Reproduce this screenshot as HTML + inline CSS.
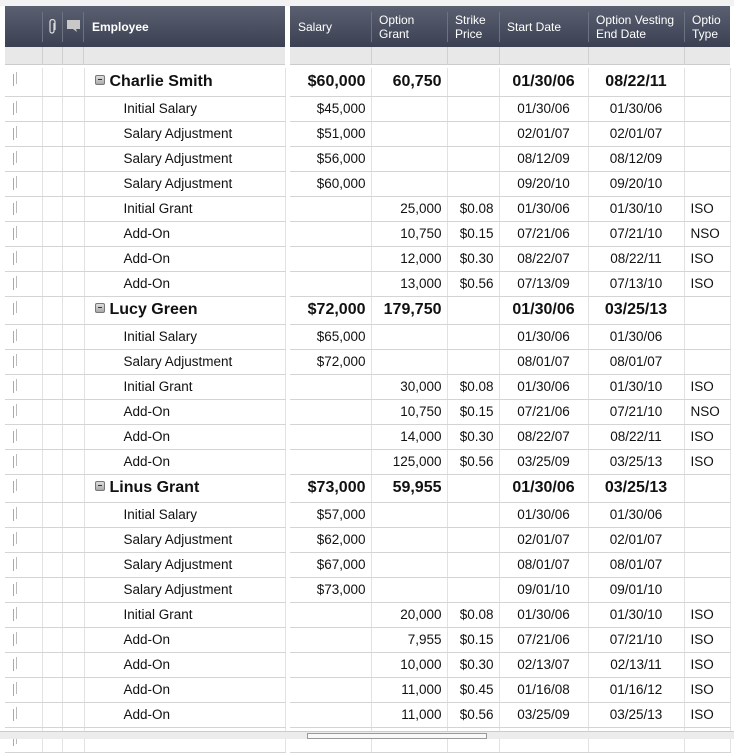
<!DOCTYPE html>
<html><head><style>
*{margin:0;padding:0;box-sizing:border-box}
body{width:734px;height:739px;overflow:hidden;background:#fff;font-family:"Liberation Sans",Arial,sans-serif;position:relative}
.top{position:absolute;left:0;top:0;width:734px;height:6px;background:#f2f2f2}
.hdr{position:absolute;left:5px;top:6px;width:725px;height:41px;background:linear-gradient(#5a6070,#3b4152);color:#fff;font-size:12px}
.hdr div{position:absolute;top:0;height:41px;display:flex;align-items:center;padding-left:8px;line-height:14px}
.hdr .sep{position:absolute;top:6px;width:1px;height:30px;background:#6d7382;padding:0}
.sub{position:absolute;left:5px;top:47px;width:725px;height:18px;background:#e8e8e8;border-bottom:1px solid #ccc}
.sub i{position:absolute;top:0;width:1px;height:18px;background:#cfcfcf}
table{position:absolute;left:5px;top:68px;border-collapse:collapse;table-layout:fixed;width:725px;font-size:13.5px;color:#111}
td{border-bottom:1px solid #d4d4d4;border-right:1px solid #e2e2e2;height:25px;padding:0;white-space:nowrap;overflow:hidden}
tr.g td{height:28px;font-weight:bold;font-size:16px}
td.h{position:relative}
td.h:after{content:"";position:absolute;left:8px;top:6px;width:1px;height:12px;background:#aaa;box-shadow:3px -2px 0 #bbb}
td.e{padding-left:39px}
tr.g td.e{padding-left:10px}
td.d{background:#fff;border-right:none;border-bottom:none;border-left:1px solid #ccc}
.r{text-align:right;padding-right:5px}
.c{text-align:center}
.l{padding-left:6px}
.m{display:inline-block;width:10px;height:10px;border:1px solid #777;border-radius:2px;background:linear-gradient(#ddd,#aaa);vertical-align:1px;margin-right:5px;position:relative}
.m:after{content:"";position:absolute;left:2px;top:3px;width:4px;height:1px;background:#333}
.bot{position:absolute;left:0;top:731px;width:734px;height:8px;background:#ececec;border-top:1px solid #ccc}
.thumb{position:absolute;left:307px;top:733px;width:180px;height:6px;border:1px solid #999;background:#f8f8f8}
</style></head><body>
<div class="top"></div>
<div class="hdr">
<span class="sep" style="left:37px"></span><span class="sep" style="left:57px"></span><span class="sep" style="left:78px"></span>
<svg style="position:absolute;left:43px;top:13px" width="9" height="16" viewBox="0 0 9 16"><path d="M6 4 V12 A2 2 0 0 1 2 12 V3 A2.5 2.5 0 0 1 7 3 V11" fill="none" stroke="#ddd" stroke-width="1.2"/></svg>
<svg style="position:absolute;left:62px;top:14px" width="14" height="13" viewBox="0 0 14 13"><path d="M0 0 H13 V9 H9 L10 12 L6 9 H0 Z" fill="#c8c8c8"/></svg>
<div style="left:79px;font-weight:bold">Employee</div>
<div style="left:280px;width:5px;background:#fff;padding:0"></div>
<div style="left:285px">Salary</div><span class="sep" style="left:366px"></span>
<div style="left:366px">Option<br>Grant</div><span class="sep" style="left:442px"></span>
<div style="left:442px">Strike<br>Price</div><span class="sep" style="left:494px"></span>
<div style="left:494px">Start Date</div><span class="sep" style="left:583px"></span>
<div style="left:583px">Option Vesting<br>End Date</div><span class="sep" style="left:679px"></span>
<div style="left:679px">Optio<br>Type</div>
</div>
<div class="sub"><i style="left:37px"></i><i style="left:57px"></i><i style="left:78px"></i><i style="left:280px;width:5px;background:#fff"></i><i style="left:366px"></i><i style="left:442px"></i><i style="left:494px"></i><i style="left:583px"></i><i style="left:679px"></i></div>
<table>
<colgroup><col style="width:37px"><col style="width:20px"><col style="width:22px"><col style="width:201px"><col style="width:5px"><col style="width:81px"><col style="width:76px"><col style="width:52px"><col style="width:89px"><col style="width:96px"><col style="width:46px"></colgroup>
<tr class="g"><td class="h"></td><td></td><td></td><td class="e"><span class="m"></span>Charlie Smith</td><td class="d"></td><td class="r">$60,000</td><td class="r">60,750</td><td></td><td class="c">01/30/06</td><td class="c">08/22/11</td><td></td></tr>
<tr><td class="h"></td><td></td><td></td><td class="e">Initial Salary</td><td class="d"></td><td class="r">$45,000</td><td></td><td></td><td class="c">01/30/06</td><td class="c">01/30/06</td><td></td></tr>
<tr><td class="h"></td><td></td><td></td><td class="e">Salary Adjustment</td><td class="d"></td><td class="r">$51,000</td><td></td><td></td><td class="c">02/01/07</td><td class="c">02/01/07</td><td></td></tr>
<tr><td class="h"></td><td></td><td></td><td class="e">Salary Adjustment</td><td class="d"></td><td class="r">$56,000</td><td></td><td></td><td class="c">08/12/09</td><td class="c">08/12/09</td><td></td></tr>
<tr><td class="h"></td><td></td><td></td><td class="e">Salary Adjustment</td><td class="d"></td><td class="r">$60,000</td><td></td><td></td><td class="c">09/20/10</td><td class="c">09/20/10</td><td></td></tr>
<tr><td class="h"></td><td></td><td></td><td class="e">Initial Grant</td><td class="d"></td><td></td><td class="r">25,000</td><td class="r">$0.08</td><td class="c">01/30/06</td><td class="c">01/30/10</td><td class="l">ISO</td></tr>
<tr><td class="h"></td><td></td><td></td><td class="e">Add-On</td><td class="d"></td><td></td><td class="r">10,750</td><td class="r">$0.15</td><td class="c">07/21/06</td><td class="c">07/21/10</td><td class="l">NSO</td></tr>
<tr><td class="h"></td><td></td><td></td><td class="e">Add-On</td><td class="d"></td><td></td><td class="r">12,000</td><td class="r">$0.30</td><td class="c">08/22/07</td><td class="c">08/22/11</td><td class="l">ISO</td></tr>
<tr><td class="h"></td><td></td><td></td><td class="e">Add-On</td><td class="d"></td><td></td><td class="r">13,000</td><td class="r">$0.56</td><td class="c">07/13/09</td><td class="c">07/13/10</td><td class="l">ISO</td></tr>
<tr class="g"><td class="h"></td><td></td><td></td><td class="e"><span class="m"></span>Lucy Green</td><td class="d"></td><td class="r">$72,000</td><td class="r">179,750</td><td></td><td class="c">01/30/06</td><td class="c">03/25/13</td><td></td></tr>
<tr><td class="h"></td><td></td><td></td><td class="e">Initial Salary</td><td class="d"></td><td class="r">$65,000</td><td></td><td></td><td class="c">01/30/06</td><td class="c">01/30/06</td><td></td></tr>
<tr><td class="h"></td><td></td><td></td><td class="e">Salary Adjustment</td><td class="d"></td><td class="r">$72,000</td><td></td><td></td><td class="c">08/01/07</td><td class="c">08/01/07</td><td></td></tr>
<tr><td class="h"></td><td></td><td></td><td class="e">Initial Grant</td><td class="d"></td><td></td><td class="r">30,000</td><td class="r">$0.08</td><td class="c">01/30/06</td><td class="c">01/30/10</td><td class="l">ISO</td></tr>
<tr><td class="h"></td><td></td><td></td><td class="e">Add-On</td><td class="d"></td><td></td><td class="r">10,750</td><td class="r">$0.15</td><td class="c">07/21/06</td><td class="c">07/21/10</td><td class="l">NSO</td></tr>
<tr><td class="h"></td><td></td><td></td><td class="e">Add-On</td><td class="d"></td><td></td><td class="r">14,000</td><td class="r">$0.30</td><td class="c">08/22/07</td><td class="c">08/22/11</td><td class="l">ISO</td></tr>
<tr><td class="h"></td><td></td><td></td><td class="e">Add-On</td><td class="d"></td><td></td><td class="r">125,000</td><td class="r">$0.56</td><td class="c">03/25/09</td><td class="c">03/25/13</td><td class="l">ISO</td></tr>
<tr class="g"><td class="h"></td><td></td><td></td><td class="e"><span class="m"></span>Linus Grant</td><td class="d"></td><td class="r">$73,000</td><td class="r">59,955</td><td></td><td class="c">01/30/06</td><td class="c">03/25/13</td><td></td></tr>
<tr><td class="h"></td><td></td><td></td><td class="e">Initial Salary</td><td class="d"></td><td class="r">$57,000</td><td></td><td></td><td class="c">01/30/06</td><td class="c">01/30/06</td><td></td></tr>
<tr><td class="h"></td><td></td><td></td><td class="e">Salary Adjustment</td><td class="d"></td><td class="r">$62,000</td><td></td><td></td><td class="c">02/01/07</td><td class="c">02/01/07</td><td></td></tr>
<tr><td class="h"></td><td></td><td></td><td class="e">Salary Adjustment</td><td class="d"></td><td class="r">$67,000</td><td></td><td></td><td class="c">08/01/07</td><td class="c">08/01/07</td><td></td></tr>
<tr><td class="h"></td><td></td><td></td><td class="e">Salary Adjustment</td><td class="d"></td><td class="r">$73,000</td><td></td><td></td><td class="c">09/01/10</td><td class="c">09/01/10</td><td></td></tr>
<tr><td class="h"></td><td></td><td></td><td class="e">Initial Grant</td><td class="d"></td><td></td><td class="r">20,000</td><td class="r">$0.08</td><td class="c">01/30/06</td><td class="c">01/30/10</td><td class="l">ISO</td></tr>
<tr><td class="h"></td><td></td><td></td><td class="e">Add-On</td><td class="d"></td><td></td><td class="r">7,955</td><td class="r">$0.15</td><td class="c">07/21/06</td><td class="c">07/21/10</td><td class="l">ISO</td></tr>
<tr><td class="h"></td><td></td><td></td><td class="e">Add-On</td><td class="d"></td><td></td><td class="r">10,000</td><td class="r">$0.30</td><td class="c">02/13/07</td><td class="c">02/13/11</td><td class="l">ISO</td></tr>
<tr><td class="h"></td><td></td><td></td><td class="e">Add-On</td><td class="d"></td><td></td><td class="r">11,000</td><td class="r">$0.45</td><td class="c">01/16/08</td><td class="c">01/16/12</td><td class="l">ISO</td></tr>
<tr><td class="h"></td><td></td><td></td><td class="e">Add-On</td><td class="d"></td><td></td><td class="r">11,000</td><td class="r">$0.56</td><td class="c">03/25/09</td><td class="c">03/25/13</td><td class="l">ISO</td></tr>
<tr><td class="h"></td><td></td><td></td><td class="e"></td><td class="d"></td><td></td><td></td><td></td><td></td><td></td><td></td></tr>
</table>
<div class="bot"></div><div class="thumb"></div>
</body></html>
